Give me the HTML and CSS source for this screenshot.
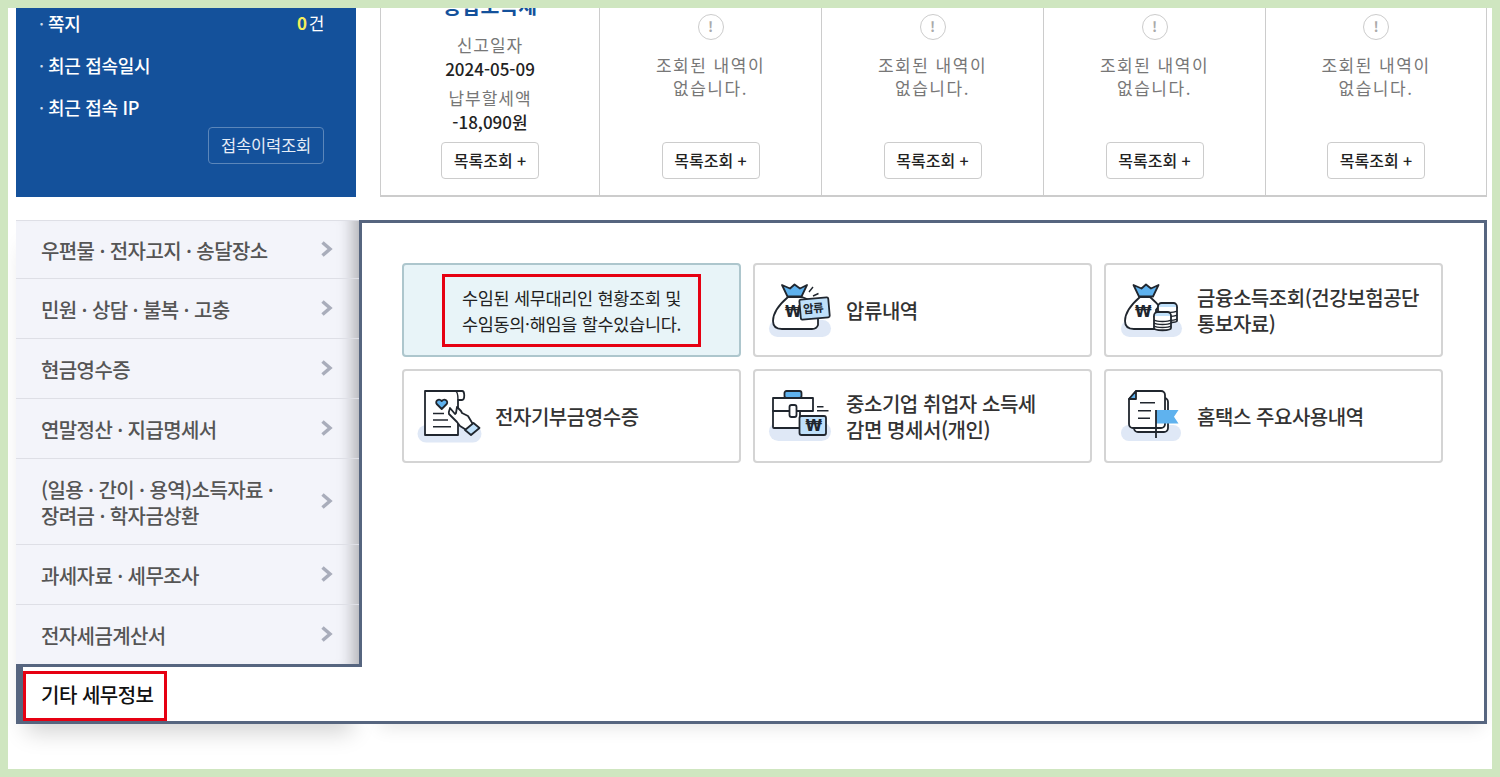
FILE: index.html
```html
<!DOCTYPE html>
<html lang="ko">
<head>
  <meta charset="UTF-8" />
  <meta name="viewport" content="width=device-width, initial-scale=1" />
  <title>나의 홈택스</title>
  <link rel="stylesheet" href="styles.css">
</head>
<body>
  <div class="frame">
    <!-- 상단 요약 -->
    <section class="summary">
      <div class="user-box">
        <ul class="user-info">
          <li><span>쪽지</span><span class="count"><b>0</b>건</span></li>
          <li><span>최근 접속일시</span></li>
          <li><span>최근 접속 IP</span></li>
        </ul>
        <a class="history-btn" href="#">접속이력조회</a>
      </div>
      <div class="tax-cols">
        <div class="tax-col">
          <div class="tax-title">종합소득세</div>
          <dl class="tax-data">
            <dt>신고일자</dt>
            <dd>2024-05-09</dd>
            <dt>납부할세액</dt>
            <dd>-18,090원</dd>
          </dl>
          <a class="list-btn" href="#">목록조회 +</a>
        </div>
        <div class="tax-col">
          <span class="alert-icon">!</span>
          <p class="empty">조회된 내역이<br>없습니다.</p>
          <a class="list-btn" href="#">목록조회 +</a>
        </div>
        <div class="tax-col">
          <span class="alert-icon">!</span>
          <p class="empty">조회된 내역이<br>없습니다.</p>
          <a class="list-btn" href="#">목록조회 +</a>
        </div>
        <div class="tax-col">
          <span class="alert-icon">!</span>
          <p class="empty">조회된 내역이<br>없습니다.</p>
          <a class="list-btn" href="#">목록조회 +</a>
        </div>
        <div class="tax-col">
          <span class="alert-icon">!</span>
          <p class="empty">조회된 내역이<br>없습니다.</p>
          <a class="list-btn" href="#">목록조회 +</a>
        </div>
      </div>
    </section>

    <!-- 메뉴 탭 -->
    <section class="tabs">
      <div class="side">
        <ul class="menu">
          <li><span>우편물 · 전자고지 · 송달장소</span><svg class="chev" viewBox="0 0 12 16"><path d="M1.500 1.500l7.500 6.500-7.500 6.500"/></svg></li>
          <li><span>민원 · 상담 · 불복 · 고충</span><svg class="chev" viewBox="0 0 12 16"><path d="M1.500 1.500l7.500 6.500-7.500 6.500"/></svg></li>
          <li><span>현금영수증</span><svg class="chev" viewBox="0 0 12 16"><path d="M1.500 1.500l7.500 6.500-7.500 6.500"/></svg></li>
          <li><span>연말정산 · 지급명세서</span><svg class="chev" viewBox="0 0 12 16"><path d="M1.500 1.500l7.500 6.500-7.500 6.500"/></svg></li>
          <li class="tall"><span>(일용 · 간이 · 용역)소득자료 ·<br>장려금 · 학자금상환</span><svg class="chev" viewBox="0 0 12 16"><path d="M1.500 1.500l7.500 6.500-7.500 6.500"/></svg></li>
          <li><span>과세자료 · 세무조사</span><svg class="chev" viewBox="0 0 12 16"><path d="M1.500 1.500l7.500 6.500-7.500 6.500"/></svg></li>
          <li><span>전자세금계산서</span><svg class="chev" viewBox="0 0 12 16"><path d="M1.500 1.500l7.500 6.500-7.500 6.500"/></svg></li>
        </ul>
        <div class="active-tab"><span class="mark">기타 세무정보</span></div>
      </div>

      <div class="panel">
        <div class="cards">
          <a class="card card-on" href="#">
            <span class="mark mark-note">수임된 세무대리인 현황조회 및<br>수임동의·해임을 할수있습니다.</span>
          </a>

          <a class="card" href="#">
            <svg class="ico" viewBox="0 0 66 56">
              <rect class="ground" x="1" y="38" width="62" height="17" rx="8.5"/>
              <path class="line white" d="M20 15C13 21 5 30 5 39c0 6 4 8 9 8h30c3 0 5-1 6-4V26c-3-5-10-9-16-11z"/>
              <path class="line blue" d="M14 3l8 3.500 4.500-4 5.500 4 7-3.500-5.500 11.500H19.500z"/>
              <path class="thin" d="M41 10l4-5M45 14l5.500-2.500"/>
              <text class="won" x="17" y="35">₩</text>
              <rect class="line sky" x="32" y="16.500" width="29" height="20" rx="1.500" transform="rotate(-5 46 26)"/>
              <text class="tag" x="35" y="30.500" transform="rotate(-5 46 26)">압류</text>
            </svg>
            <span class="card-txt">압류내역</span>
          </a>

          <a class="card" href="#">
            <svg class="ico" viewBox="0 0 66 56">
              <rect class="ground" x="2" y="38" width="61" height="17" rx="8.500"/>
              <path class="line white" d="M21 15C14 21 6 30 6 39c0 6 4 8 9 8h22V28c2-2 2-3 3-4-3-4-7-7-9-9z"/>
              <path class="line blue" d="M14.500 3l8 3.500 4.500-4 5 4 7.500-3.500-5.500 11.500H20z"/>
              <text class="won" x="16" y="35">₩</text>
              <rect class="line sky" x="39" y="21" width="19" height="7" rx="3.500"/>
              <path class="line white" d="M39 25v14c0 2 19 2 19 0V25"/>
              <path class="thin" d="M39 29c3 2 16 2 19 0M39 33c3 2 16 2 19 0M39 37c3 2 16 2 19 0"/>
              <rect class="line sky" x="35" y="30" width="17" height="7" rx="3.500"/>
              <path class="line white" d="M35 34v12c0 3 17 3 17 0V34"/>
              <path class="thin" d="M35 38c3 2 14 2 17 0M35 41c3 2 14 2 17 0M35 44c3 2 14 2 17 0"/>
            </svg>
            <span class="card-txt">금융소득조회(건강보험공단<br>통보자료)</span>
          </a>

          <a class="card" href="#">
            <svg class="ico" viewBox="0 0 66 56">
              <rect class="ground" x="0.500" y="37" width="64" height="17.500" rx="8.700"/>
              <path class="line white" d="M8 3h37c3 0 3 9 0 9h-4v35H8z"/>
              <path class="thin" d="M38 3c3 0 3 9 3 9"/>
              <path class="line blue" d="M24.700 21l-5-5c-2-3 2-6 5-3 3-3 7 0 5 3z"/>
              <path class="thin" d="M16 25.500h11M16 32h15M16 38.700h18"/>
              <path class="line white" d="M33 20l5 6 1-1 1-6 4 4 1 2 6 3 6 10-6 5-8-5-3-4-8-8c-1-3 1-4 1-6z"/>
              <path class="line sky" d="M48 42l8.500-7 6 5-8.500 7z"/>
            </svg>
            <span class="card-txt">전자기부금영수증</span>
          </a>

          <a class="card" href="#">
            <svg class="ico" viewBox="0 0 66 56">
              <rect class="ground" x="1" y="34" width="62" height="19" rx="9.500"/>
              <rect class="line blue" x="16.500" y="3" width="17" height="7" rx="2"/>
              <path class="line white" d="M5 10h40v13H5z"/>
              <path class="line white" d="M5 23h27v17H6a1 1 0 0 1-1-1z"/>
              <rect class="line white" x="21.500" y="17" width="7" height="12" rx="2"/>
              <path class="thin" d="M49 18.700h6.500M49 22.700h11.500"/>
              <rect class="line sky" x="31.500" y="28" width="26.500" height="19" rx="2"/>
              <text class="won" x="37.500" y="43">₩</text>
            </svg>
            <span class="card-txt">중소기업 취업자 소득세<br>감면 명세서(개인)</span>
          </a>

          <a class="card" href="#">
            <svg class="ico" viewBox="0 0 66 56">
              <rect class="ground" x="2" y="37" width="60" height="16" rx="8"/>
              <path class="line white" d="M15 10h30a4 4 0 0 1 4 4v26a4 4 0 0 1-4 4H19a4 4 0 0 1-4-4z"/>
              <path class="line white" d="M17 3h25a4 4 0 0 1 4 4v29a4 4 0 0 1-4 4H14a4 4 0 0 1-4-4V11z"/>
              <path class="line blue" d="M17 3l-7 8h7z"/>
              <path class="thin" d="M21 14.700h15M19 22.700h13M19 30.300h12"/>
              <path class="flag" d="M37 22h22.500l-4.500 6.700 4.500 6.800H37z"/>
              <path class="pole" d="M37 22v28"/>
            </svg>
            <span class="card-txt">홈택스 주요사용내역</span>
          </a>
        </div>
      </div>
    </section>
  </div>
</body>
</html>
```

FILE: styles.css
```css
* { box-sizing: border-box; }
body {
  margin: 0;
  font-family: "Noto Sans CJK KR", "Noto Sans", sans-serif;
  color: #333;
  background: #fff;
}
ul, dl, dd, p { margin: 0; padding: 0; }
ul { list-style: none; }
a { text-decoration: none; color: inherit; }

.frame {
  height: 777px;
  border: 8px solid #cfe6c0;
  background: #fff;
  overflow: hidden;
  padding: 0 5px 0 8px;
}

/* 상단 요약 */
.summary {
  display: flex;
  gap: 24px;
  height: 189px;
  overflow: hidden;
}
.user-box {
  width: 340px;
  background: #14519b;
  color: #fff;
  padding: 0 32px;
  display: flex;
  flex-direction: column;
}
.user-info li {
  display: flex;
  justify-content: space-between;
  height: 42px;
  line-height: 30px;
  font-size: 18px;
  font-weight: 500;
  letter-spacing: -0.3px;
  position: relative;
}
.user-info li::before {
  content: "·";
  position: absolute;
  left: -9px;
  font-weight: 400;
  opacity: .8;
}
.user-info .count { font-weight: 400; font-size: 17px; }
.user-info .count b { color: #f5ee5a; margin-right: 2px; }
.history-btn {
  align-self: flex-end;
  width: 116px;
  height: 37px;
  margin-top: -7px;
  line-height: 34px;
  text-align: center;
  font-size: 16.500px;
  letter-spacing: -0.2px;
  color: #e6edf7;
  border: 1px solid #5b86ba;
  border-radius: 4px;
}
.tax-cols {
  flex: 1;
  display: grid;
  grid-template-columns: 218px 222px 222px 222px 1fr;
  border: 1px solid #ccc;
  border-top: 0;
  border-bottom-width: 2px;
}
.tax-col {
  display: flex;
  flex-direction: column;
  align-items: center;
  border-left: 1px solid #ccc;
  position: relative;
  padding-top: 6px;
}
.tax-col:first-child { border-left: 0; }
.tax-title {
  margin-top: -24px;
  height: 30px;
  line-height: 30px;
  font-size: 20.500px;
  font-weight: 700;
  color: #14519b;
}
.tax-data { text-align: center; margin-top: 7px; }
.tax-data dt {
  color: #777;
  font-size: 17px;
  letter-spacing: 1px;
  line-height: 24px;
  margin-top: 6px;
}
.tax-data dd {
  color: #222;
  font-size: 17px;
  font-weight: 500;
  line-height: 23px;
}
.alert-icon {
  width: 26px;
  height: 26px;
  border: 1px solid #ccc;
  border-radius: 50%;
  text-align: center;
  line-height: 23px;
  font-size: 14px;
  font-weight: 700;
  color: #aaa;
}
.empty {
  margin-top: 13px;
  text-align: center;
  font-size: 17px;
  line-height: 23px;
  letter-spacing: 1.500px;
  color: #777;
}
.list-btn {
  position: absolute;
  bottom: 16px;
  left: 50%;
  transform: translateX(-50%);
  width: 98px;
  height: 37px;
  line-height: 35px;
  text-align: center;
  font-size: 16px;
  font-weight: 500;
  color: #222;
  background: #fff;
  border: 1px solid #ccc;
  border-radius: 4px;
}

/* 메뉴 탭 */
.tabs {
  display: flex;
  margin-top: 23px;
  height: 504px;
}
.side {
  width: 346px;
  display: flex;
  flex-direction: column;
  box-shadow: 0 18px 22px -10px rgba(0, 0, 0, .18);
}
.menu {
  height: 447px;
  display: flex;
  flex-direction: column;
  background: #f3f4fa;
  border-right: 3px solid #56657f;
  border-bottom: 3px solid #56657f;
  box-shadow: inset -20px 0 16px -14px rgba(0, 0, 0, .28);
}
.menu li {
  flex: 0 0 60px;
  display: flex;
  align-items: center;
  justify-content: space-between;
  padding: 0 26px 0 25px;
  border-top: 1px solid #dedfe6;
  font-size: 20px;
  font-weight: 500;
  line-height: 26px;
  letter-spacing: -0.6px;
  color: #555;
}
.menu li:first-child { flex-basis: 58px; }
.menu li:last-child { flex: 1; }
.menu li.tall { flex-basis: 86px; }
.menu li span { padding-top: 2px; }
.chev {
  flex: none;
  width: 12px;
  height: 16px;
  margin-bottom: 2px;
}
.chev path {
  fill: none;
  stroke: #a9adbb;
  stroke-width: 3.500;
}
.active-tab {
  flex: 1;
  background: #fff;
  border-left: 7px solid #56657f;
  border-bottom: 3px solid #56657f;
  padding-top: 4px;
}
.active-tab .mark {
  display: block;
  width: 144px;
  height: 50px;
  padding-left: 15px;
  line-height: 42px;
  font-size: 20px;
  font-weight: 500;
  letter-spacing: -0.5px;
  color: #111;
}
.mark { border: 3px solid #e60012; }

.panel {
  flex: 1;
  border: 3px solid #56657f;
  border-left: 0;
  background: #fff;
  padding: 40px 40px 0 40px;
  box-shadow: 6px 14px 18px -12px rgba(0, 0, 0, .12);
}
.cards {
  display: grid;
  grid-template-columns: repeat(3, 339px);
  grid-auto-rows: 94px;
  gap: 12px;
}
.card {
  display: flex;
  align-items: center;
  gap: 12px;
  padding-left: 13px;
  border: 2px solid #d4d4d4;
  border-radius: 4px;
  background: #fff;
}
.card-on {
  justify-content: center;
  padding: 0;
  background: #e8f4f8;
  border-color: #adc6cd;
}
.mark-note {
  width: 259px;
  height: 73px;
  display: flex;
  align-items: center;
  justify-content: center;
  text-align: center;
  font-size: 17.500px;
  line-height: 26px;
  letter-spacing: -0.3px;
  color: #222;
  padding-top: 2px;
}
.card-txt {
  font-size: 20px;
  font-weight: 500;
  line-height: 26px;
  letter-spacing: -0.45px;
  color: #333;
  padding-top: 1px;
}

/* 아이콘 */
.ico { flex: none; width: 66px; height: 56px; }
.ground { fill: #dfe8f6; }
.line { stroke: #20262e; stroke-width: 1.800; stroke-linejoin: round; }
.white { fill: #fff; }
.blue { fill: #5fb2ee; }
.sky { fill: #bfe0fa; }
.thin { fill: none; stroke: #20262e; stroke-width: 1.400; }
.flag { fill: #5fb2ee; }
.pole { fill: none; stroke: #20262e; stroke-width: 1.800; }
.won {
  font-family: "DejaVu Sans", sans-serif;
  font-size: 15px;
  font-weight: 700;
  fill: #20262e;
}
.tag {
  font-size: 11.500px;
  font-weight: 700;
  letter-spacing: -0.5px;
  fill: #20262e;
}
```
